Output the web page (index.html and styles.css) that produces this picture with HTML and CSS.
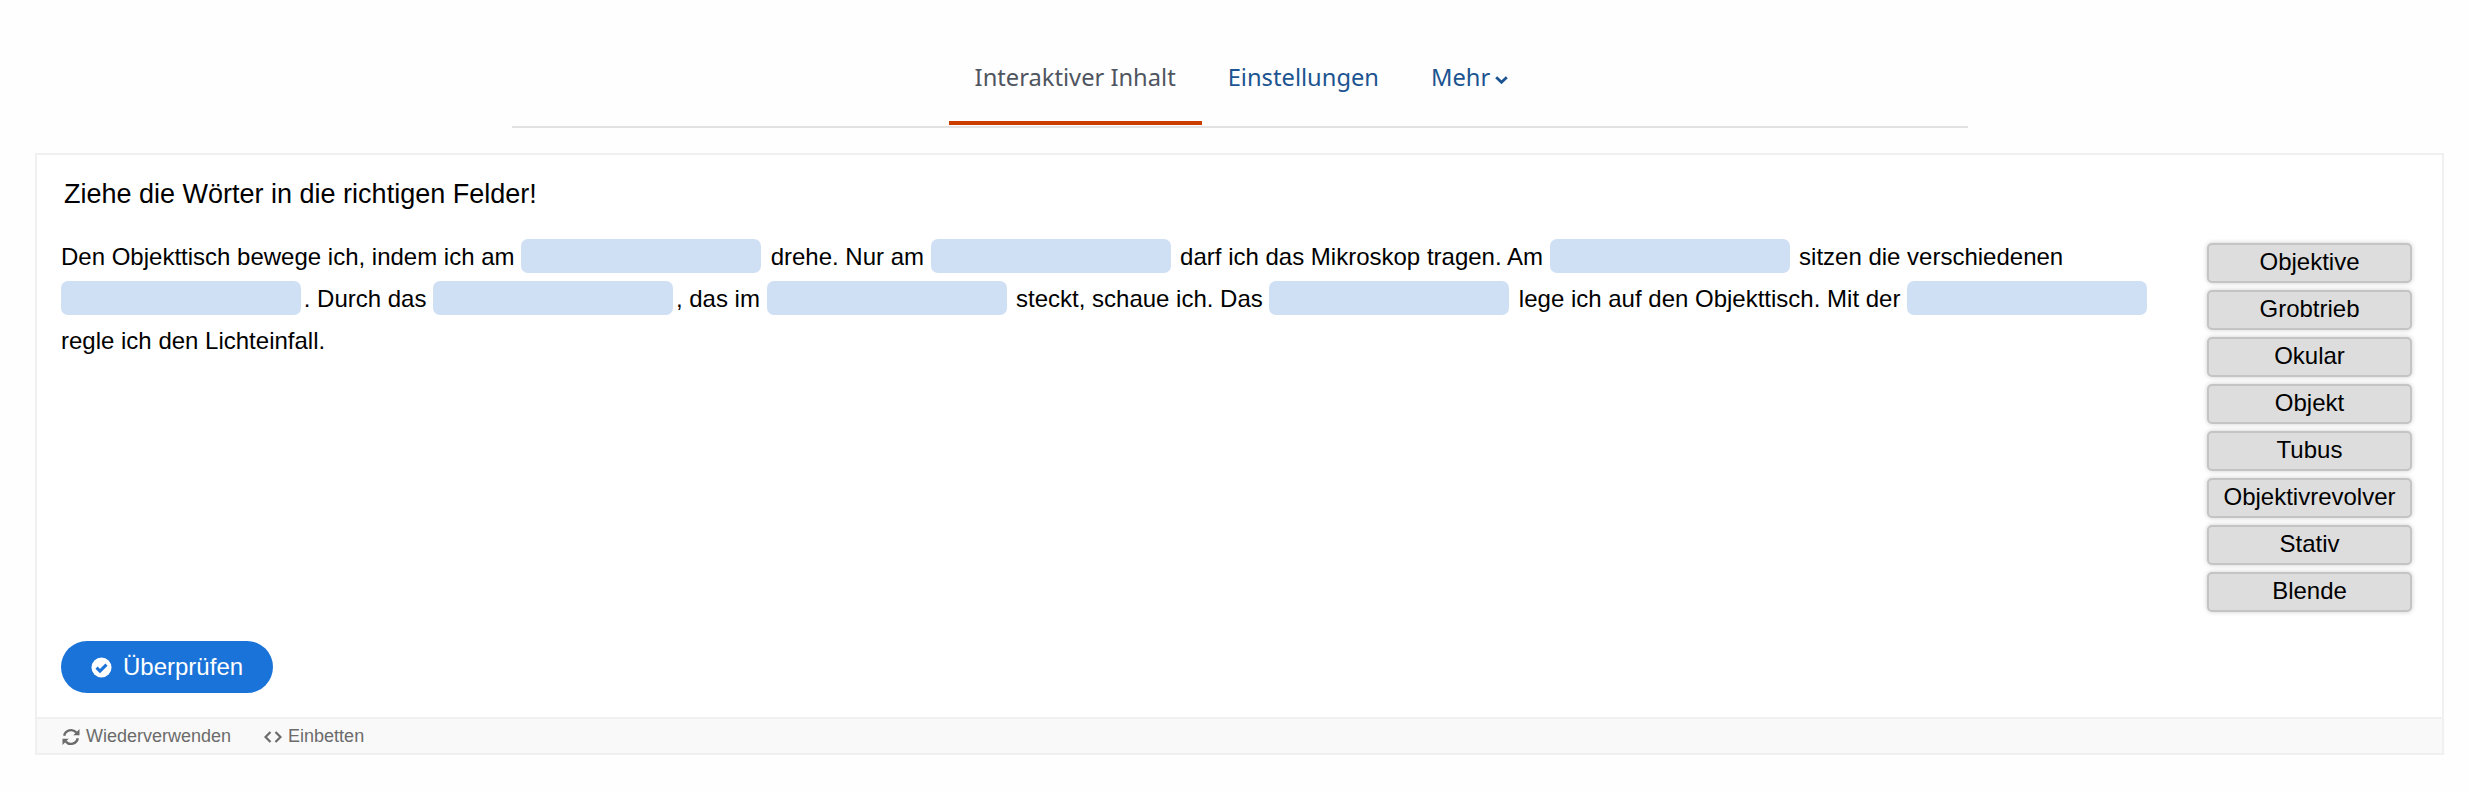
FILE: index.html
```html
<!DOCTYPE html>
<html lang="de">
<head>
<meta charset="utf-8">
<title>Ziehe die Wörter in die richtigen Felder</title>
<link rel="stylesheet" href="styles.css">
</head>
<body>
<nav class="tabs">
  <a class="tab tab-active">Interaktiver Inhalt</a>
  <a class="tab">Einstellungen</a>
  <a class="tab">Mehr
    <svg class="chevron" viewBox="0 0 13 8" width="13" height="8"><path d="M1.200 1.200 6.500 6.300 11.800 1.200" fill="none" stroke="currentColor" stroke-width="2.800"/></svg>
  </a>
</nav>
<main class="card">
  <div class="content">
    <h1 class="title">Ziehe die Wörter in die richtigen Felder!</h1>
    <div class="task">
      <p class="cloze">Den Objekttisch bewege ich, indem ich am <span class="blank"></span> drehe. Nur am <span class="blank"></span> darf ich das Mikroskop tragen. Am <span class="blank"></span> sitzen die verschiedenen <span class="blank"></span>. Durch das <span class="blank"></span>, das im <span class="blank"></span> steckt, schaue ich. Das <span class="blank"></span> lege ich auf den Objekttisch. Mit der <span class="blank"></span> regle ich den Lichteinfall.</p>
      <div class="words">
        <div class="word">Objektive</div>
        <div class="word">Grobtrieb</div>
        <div class="word">Okular</div>
        <div class="word">Objekt</div>
        <div class="word">Tubus</div>
        <div class="word">Objektivrevolver</div>
        <div class="word">Stativ</div>
        <div class="word">Blende</div>
      </div>
    </div>
    <button class="check" type="button">
      <svg class="check-icon" viewBox="0 0 22 22" width="21" height="21"><circle cx="11" cy="11" r="10.500" fill="#fff"/><path d="M5.800 11.200 9.400 14.800 16.200 8" fill="none" stroke="#1a73d8" stroke-width="3.200"/></svg>
      Überprüfen
    </button>
  </div>
  <footer class="actions">
    <a class="action">
      <svg class="action-icon" viewBox="0 0 18 18" width="18" height="18"><g fill="none" stroke="currentColor" stroke-width="2.400"><path d="M2.200 7.800A7 7 0 0 1 14.200 4.400"/><path d="M15.800 10.200A7 7 0 0 1 3.800 13.600"/></g><path fill="currentColor" d="M17.500 1v6.200h-6.200zM.5 17v-6.200h6.200z"/></svg>
      Wiederverwenden
    </a>
    <a class="action">
      <svg class="action-icon" viewBox="0 0 18 12" width="18" height="12"><path d="M6.500 1 1.500 6l5 5M11.500 1l5 5-5 5" fill="none" stroke="currentColor" stroke-width="2.200"/></svg>
      Einbetten
    </a>
  </footer>
</main>
</body>
</html>
```

FILE: styles.css
```css
* { box-sizing: border-box; }

html, body { margin: 0; padding: 0; }

body {
  background: #fefefe;
  font-family: "Liberation Sans", Arial, sans-serif;
  color: #000;
  height: 792px;
  overflow: hidden;
  padding-top: 44px;
}

.tabs {
  display: flex;
  justify-content: center;
  width: 1456px;
  height: 84px;
  margin-left: 512px;
  padding-left: 3px;
  border-bottom: 2px solid #e2e2e2;
  font-family: "Noto Sans", sans-serif;
  font-size: 23.700px;
  line-height: 32px;
}

.tab {
  display: block;
  height: 81px;
  padding: 17px 26px 0;
  color: #1c5491;
  white-space: nowrap;
}

.tab-active {
  color: #4f5560;
  border-bottom: 4px solid #cc3d00;
}

.chevron { margin-left: -1px; vertical-align: 2px; }

.card {
  width: 2409px;
  height: 602px;
  margin: 25px 0 0 35px;
  border: 2px solid #f0f0f0;
  background: #fff;
  display: flex;
  flex-direction: column;
}

.content {
  flex: 1;
  padding: 0 0 24px 24px;
  display: flex;
  flex-direction: column;
}

.title {
  margin: 0 0 0 3px;
  padding-top: 24px;
  font-size: 27px;
  font-weight: 400;
  line-height: 30px;
}

.task {
  display: flex;
  flex: 1;
  justify-content: space-between;
  padding-right: 30px;
  padding-top: 27px;
}

.cloze {
  width: 2110px;
  margin: 0;
  font-size: 24px;
  line-height: 42px;
}

.blank {
  display: inline-block;
  width: 240px;
  height: 34px;
  margin-right: 2.750px;
  vertical-align: -8px;
  border-radius: 7px;
  background: #cfe0f5;
}

.words {
  display: flex;
  flex-direction: column;
  gap: 7px;
  width: 205px;
  margin-top: 7px;
}

.word {
  height: 40px;
  border: 2px solid #c4c4c4;
  border-radius: 5px;
  background: #dddddd;
  box-shadow: 0 0 5px rgba(0, 0, 0, 0.2);
  text-align: center;
  font-size: 24px;
  line-height: 34px;
}

.check {
  display: flex;
  align-items: center;
  gap: 11px;
  width: 212px;
  height: 52px;
  padding: 0 0 0 30px;
  border: 0;
  border-radius: 26px;
  background: #1a73d8;
  color: #fff;
  font-family: inherit;
  font-size: 24px;
}

.actions {
  display: flex;
  gap: 33px;
  height: 36px;
  padding: 1px 0 0 25px;
  align-items: center;
  border-top: 2px solid #f0f0f0;
  background: #f9f9f9;
  color: #6b6b6b;
  font-size: 18px;
}

.action {
  display: flex;
  align-items: center;
  gap: 6px;
}
```
